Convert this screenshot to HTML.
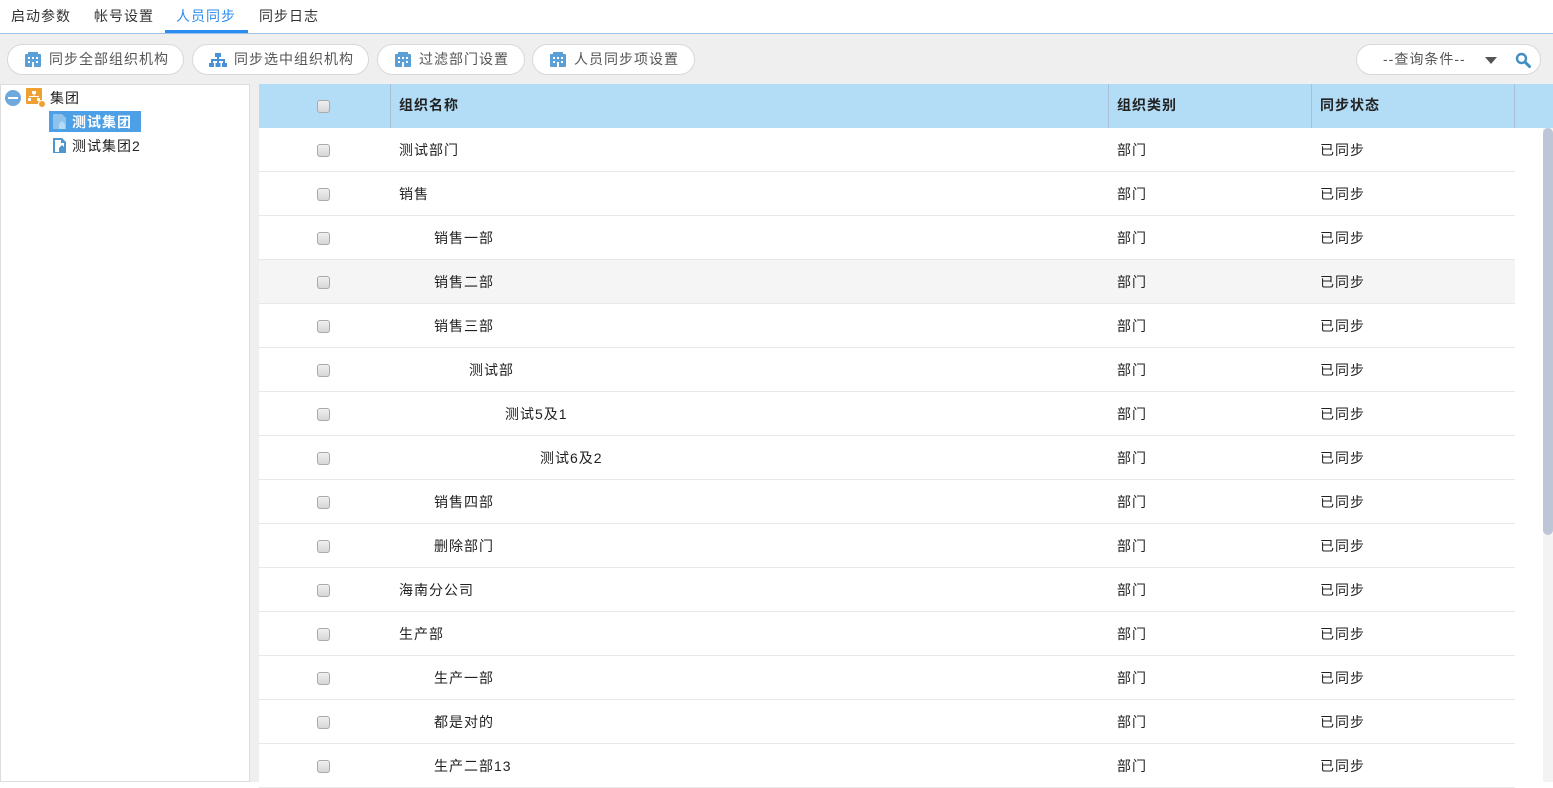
<!DOCTYPE html>
<html><head><meta charset="utf-8">
<style>
*{margin:0;padding:0;box-sizing:border-box}
body{width:1553px;height:782px;overflow:hidden;background:#fff;font-family:"Liberation Sans","Noto Sans CJK SC",sans-serif;font-size:14px;color:#222;position:relative;letter-spacing:1px}
.tabs{position:absolute;left:0;top:0;width:1553px;height:34px;border-bottom:1px solid #9cc3ea;background:#fff}
.tab{position:absolute;top:6px;font-size:14px;color:#333}
.tab.on{color:#2d8cf0}
.tabline{position:absolute;left:165px;top:30px;width:83px;height:3px;background:#2d8cf0}
.bar{position:absolute;left:0;top:34px;width:1553px;height:748px;background:#efefef}
.btn{position:absolute;top:44px;height:31px;border:1px solid #d8d8d8;border-radius:16px;background:#fff;color:#555;font-size:14px;line-height:29px;padding-left:41px}
.btn svg{position:absolute;left:16px;top:7px}
.search{position:absolute;left:1356px;top:44px;width:185px;height:31px;border:1px solid #d8d8d8;border-radius:16px;background:#fff;color:#555;line-height:29px}
.left{position:absolute;left:0;top:84px;width:250px;height:698px;background:#fff;border:1px solid #ddd}
.table{position:absolute;left:259px;top:84px;width:1294px;height:698px;background:#fff}
.hdr{position:absolute;left:0;top:0;width:1294px;height:44px;background:#b3dcf6}
.hdr span{position:absolute;top:11px;font-weight:bold;font-size:14px;color:#222}
.vl{position:absolute;top:0;width:1px;height:44px;background:#a9bfd6}
.row{position:absolute;left:0;width:1256px;height:44px;border-bottom:1px solid #e8e8e8}
.row span{position:absolute;top:12px}
.cb{position:absolute;width:13px;height:13px;border:1px solid #aaa;border-radius:3px;background:linear-gradient(#f0f0f0,#d6d6d6)}
.sb{position:absolute;left:1284px;top:44px;width:10px;height:654px;background:#f3f3f3}
.th{position:absolute;left:0;top:0;width:10px;height:407px;background:#bcc6d6;border-radius:5px}
</style></head><body>
<div class="tabs">
<span class="tab" style="left:11px">启动参数</span>
<span class="tab" style="left:94px">帐号设置</span>
<span class="tab on" style="left:176px">人员同步</span>
<span class="tab" style="left:259px">同步日志</span>
<div class="tabline"></div>
</div>
<div class="bar"></div>
<div class="btn" style="left:7px;width:177px"><svg width="18" height="16" viewBox="0 0 18 16"><rect x="1" y="2" width="16" height="13" rx="1" fill="#5aa0d6"/><rect x="4" y="0" width="10" height="3" fill="#5aa0d6"/><g fill="#fff"><rect x="4" y="5" width="2" height="2"/><rect x="8" y="5" width="2" height="2"/><rect x="12" y="5" width="2" height="2"/><rect x="4" y="9" width="2" height="2"/><rect x="12" y="9" width="2" height="2"/><rect x="8" y="10" width="2" height="5"/></g></svg>同步全部组织机构</div>
<div class="btn" style="left:192px;width:177px"><svg width="18" height="16" viewBox="0 0 18 16"><g fill="#4a90d9"><rect x="6" y="1" width="6" height="4"/><rect x="8" y="5" width="2" height="3"/><rect x="2" y="7" width="14" height="2"/><rect x="2" y="8" width="2" height="3"/><rect x="8" y="8" width="2" height="3"/><rect x="14" y="8" width="2" height="3"/><rect x="0" y="11" width="5" height="4"/><rect x="6.5" y="11" width="5" height="4"/><rect x="13" y="11" width="5" height="4"/></g></svg>同步选中组织机构</div>
<div class="btn" style="left:377px;width:148px"><svg width="18" height="16" viewBox="0 0 18 16"><rect x="1" y="2" width="16" height="13" rx="1" fill="#5aa0d6"/><rect x="4" y="0" width="10" height="3" fill="#5aa0d6"/><g fill="#fff"><rect x="4" y="5" width="2" height="2"/><rect x="8" y="5" width="2" height="2"/><rect x="12" y="5" width="2" height="2"/><rect x="4" y="9" width="2" height="2"/><rect x="12" y="9" width="2" height="2"/><rect x="8" y="10" width="2" height="5"/></g></svg>过滤部门设置</div>
<div class="btn" style="left:532px;width:163px"><svg width="18" height="16" viewBox="0 0 18 16"><rect x="1" y="2" width="16" height="13" rx="1" fill="#5aa0d6"/><rect x="4" y="0" width="10" height="3" fill="#5aa0d6"/><g fill="#fff"><rect x="4" y="5" width="2" height="2"/><rect x="8" y="5" width="2" height="2"/><rect x="12" y="5" width="2" height="2"/><rect x="4" y="9" width="2" height="2"/><rect x="12" y="9" width="2" height="2"/><rect x="8" y="10" width="2" height="5"/></g></svg>人员同步项设置</div>
<div class="search"><span style="position:absolute;left:26px">--查询条件--</span>
<div style="position:absolute;left:128px;top:12px;width:0;height:0;border-left:6px solid transparent;border-right:6px solid transparent;border-top:7px solid #555"></div>
<svg style="position:absolute;left:158px;top:7px" width="16" height="16" viewBox="0 0 16 16"><circle cx="6.5" cy="6.5" r="4.5" fill="none" stroke="#3f8fc4" stroke-width="2.4"/><path d="M10 10l4.5 4.5" stroke="#3f8fc4" stroke-width="3" stroke-linecap="round"/></svg></div>
<div class="left">
<div style="position:absolute;left:4px;top:5px;width:16px;height:16px;border-radius:50%;background:#6fa8dc"><div style="position:absolute;left:3px;top:7px;width:10px;height:2px;background:#fff"></div></div>
<svg style="position:absolute;left:25px;top:3px" width="20" height="20" viewBox="0 0 20 20"><rect x="0" y="0" width="16" height="16" rx="1" fill="#f0a030"/><g fill="#fff"><rect x="6" y="3" width="4" height="3"/><rect x="7.5" y="6" width="1" height="2"/><rect x="3" y="8" width="10" height="1"/><rect x="2" y="10" width="3" height="3"/><rect x="11" y="10" width="3" height="3"/></g><circle cx="16" cy="16" r="3.5" fill="#f0a030" stroke="#fff"/></svg>
<span style="position:absolute;left:49px;top:3px">集团</span>
<div style="position:absolute;left:48px;top:26px;width:92px;height:21px;background:#4d9fe6"></div>
<svg style="position:absolute;left:51px;top:28px" width="17" height="17" viewBox="0 0 17 17"><path d="M1 1h9l4 4v11H1z" fill="#8fc3ec"/><path d="M7 16V11l3-3 3 3v5z" fill="#b5dbf5"/></svg>
<span style="position:absolute;left:71px;top:27px;color:#fff;font-weight:bold">测试集团</span>
<svg style="position:absolute;left:51px;top:52px" width="17" height="17" viewBox="0 0 17 17"><path d="M1 1h9l4 4v11H1z" fill="#4f96cc"/><path d="M3 3h6v3h3v9H3z" fill="#fff"/><path d="M7 16V11l3-3 4 4v4z" fill="#4f96cc"/></svg>
<span style="position:absolute;left:71px;top:51px">测试集团2</span>
</div>
<div class="table">
<div class="hdr">
<div class="cb" style="left:58px;top:16px"></div>
<div class="vl" style="left:131px"></div>
<span style="left:140px">组织名称</span>
<div class="vl" style="left:849px"></div>
<span style="left:858px">组织类别</span>
<div class="vl" style="left:1052px"></div>
<span style="left:1061px">同步状态</span>
<div class="vl" style="left:1255px"></div>
</div>
<div class="row" style="top:44px"><div class="cb" style="left:58px;top:16px"></div><span style="left:140px">测试部门</span><span style="left:858px">部门</span><span style="left:1061px">已同步</span></div>
<div class="row" style="top:88px"><div class="cb" style="left:58px;top:16px"></div><span style="left:140px">销售</span><span style="left:858px">部门</span><span style="left:1061px">已同步</span></div>
<div class="row" style="top:132px"><div class="cb" style="left:58px;top:16px"></div><span style="left:175px">销售一部</span><span style="left:858px">部门</span><span style="left:1061px">已同步</span></div>
<div class="row" style="top:176px;background:#f5f5f5"><div class="cb" style="left:58px;top:16px"></div><span style="left:175px">销售二部</span><span style="left:858px">部门</span><span style="left:1061px">已同步</span></div>
<div class="row" style="top:220px"><div class="cb" style="left:58px;top:16px"></div><span style="left:175px">销售三部</span><span style="left:858px">部门</span><span style="left:1061px">已同步</span></div>
<div class="row" style="top:264px"><div class="cb" style="left:58px;top:16px"></div><span style="left:210px">测试部</span><span style="left:858px">部门</span><span style="left:1061px">已同步</span></div>
<div class="row" style="top:308px"><div class="cb" style="left:58px;top:16px"></div><span style="left:246px">测试5及1</span><span style="left:858px">部门</span><span style="left:1061px">已同步</span></div>
<div class="row" style="top:352px"><div class="cb" style="left:58px;top:16px"></div><span style="left:281px">测试6及2</span><span style="left:858px">部门</span><span style="left:1061px">已同步</span></div>
<div class="row" style="top:396px"><div class="cb" style="left:58px;top:16px"></div><span style="left:175px">销售四部</span><span style="left:858px">部门</span><span style="left:1061px">已同步</span></div>
<div class="row" style="top:440px"><div class="cb" style="left:58px;top:16px"></div><span style="left:175px">删除部门</span><span style="left:858px">部门</span><span style="left:1061px">已同步</span></div>
<div class="row" style="top:484px"><div class="cb" style="left:58px;top:16px"></div><span style="left:140px">海南分公司</span><span style="left:858px">部门</span><span style="left:1061px">已同步</span></div>
<div class="row" style="top:528px"><div class="cb" style="left:58px;top:16px"></div><span style="left:140px">生产部</span><span style="left:858px">部门</span><span style="left:1061px">已同步</span></div>
<div class="row" style="top:572px"><div class="cb" style="left:58px;top:16px"></div><span style="left:175px">生产一部</span><span style="left:858px">部门</span><span style="left:1061px">已同步</span></div>
<div class="row" style="top:616px"><div class="cb" style="left:58px;top:16px"></div><span style="left:175px">都是对的</span><span style="left:858px">部门</span><span style="left:1061px">已同步</span></div>
<div class="row" style="top:660px"><div class="cb" style="left:58px;top:16px"></div><span style="left:175px">生产二部13</span><span style="left:858px">部门</span><span style="left:1061px">已同步</span></div>
<div class="sb"><div class="th"></div></div>
</div>
</body></html>
